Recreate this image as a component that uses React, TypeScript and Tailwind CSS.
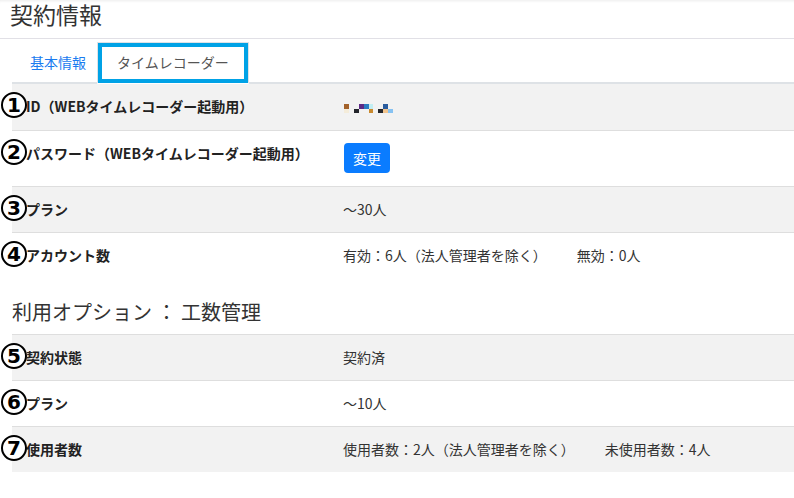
import React from "react";

type Row = {
  num: string;
  label: string;
  value: React.ReactNode;
  tall?: boolean;
  gray?: boolean;
};

function Mosaic() {
  // blurred ID, drawn as pixel blocks
  const cells: [number, number, number, string][] = [
    [1, 0, 5, "#a3622b"],
    [1, 5, 5, "#f4ecda"],
    [11, 5, 5, "#23252b"],
    [16, 0, 5, "#5c2a86"],
    [21, 0, 5, "#2b7cc2"],
    [26, 0, 4, "#c3eef2"],
    [26, 5, 4, "#c98a2f"],
    [35, 5, 5, "#23252b"],
    [40, 0, 5, "#2a5d9f"],
    [40, 5, 5, "#f2c48d"],
    [45, 5, 5, "#86c2f2"],
  ];
  return (
    <svg width="51" height="10" viewBox="0 0 51 10" className="block mt-[8px]">
      {cells.map(([x, y, w, c], i) => (
        <rect key={i} x={x} y={y} width={w} height={y === 0 ? 5 : 4} fill={c} />
      ))}
    </svg>
  );
}

function Circle({ n }: { n: string }) {
  return (
    <div className="absolute left-[-11px] top-[8px] w-[26px] h-[26px] rounded-full border-2 border-black bg-white flex items-center justify-center text-[20px] font-bold leading-none text-black font-['DejaVu_Sans',sans-serif]">
      {n}
    </div>
  );
}

function InfoRow({ row, first }: { row: Row; first?: boolean }) {
  return (
    <div
      className={`relative grid grid-cols-[331px_1fr] pt-[12px] ${row.tall ? "h-[56px]" : "h-[46px]"} ${
        first ? "" : "border-t border-[#dedede]"
      } ${row.gray ? "bg-[#f2f2f2]" : "bg-white"}`}
    >
      <div className="pl-[14px] text-[14px] leading-[20px] font-bold text-[#222]">{row.label}</div>
      <div className="text-[14px] leading-[20px] text-[#333]">{row.value}</div>
      <Circle n={row.num} />
    </div>
  );
}

export default function App() {
  const rows: Row[] = [
    { num: "1", label: "ID（WEBタイムレコーダー起動用）", value: <Mosaic />, gray: true },
    {
      num: "2",
      label: "パスワード（WEBタイムレコーダー起動用）",
      tall: true,
      value: (
        <button className="ml-[1px] w-[46px] h-[30px] rounded-[4px] bg-[#0a7cff] text-white text-[14px] leading-none flex items-center justify-center">
          変更
        </button>
      ),
    },
    { num: "3", label: "プラン", value: "～30人", gray: true },
    {
      num: "4",
      label: "アカウント数",
      value: (
        <span>
          <span className="mr-[30px]">有効：6人（法人管理者を除く）</span>
          <span>無効：0人</span>
        </span>
      ),
    },
  ];

  const options: Row[] = [
    { num: "5", label: "契約状態", value: "契約済", gray: true },
    { num: "6", label: "プラン", value: "～10人" },
    {
      num: "7",
      label: "使用者数",
      gray: true,
      value: (
        <span>
          <span className="mr-[30px]">使用者数：2人（法人管理者を除く）</span>
          <span>未使用者数：4人</span>
        </span>
      ),
    },
  ];

  return (
    <div className="w-[794px] h-[498px] bg-white overflow-hidden font-['Noto_Sans_CJK_JP','Noto_Sans',sans-serif]">
      <div className="h-[39px] border-b border-[#e1e0e6] px-[10px] pt-[1px] shadow-[inset_0_3px_3px_-2px_rgba(0,0,0,0.08)]">
        <h1 className="text-[23px] leading-[26px] font-normal text-[#333]">契約情報</h1>
      </div>

      <div className="ml-[12px] pt-[3px] border-b-2 border-[#dee2e6] flex">
        <div className="h-[40px] w-[85px] pl-[18px] flex items-center text-[14px] text-[#1a7cf0]">基本情報</div>
        <div className="relative h-[42px] -mb-[2px] px-[19px] border-x border-t border-[#dee2e6] border-b-2 border-b-white flex items-center text-[14px] text-[#555]">
          タイムレコーダー
          <div className="absolute left-0 top-0 right-0 bottom-[-1px] border-4 border-[#00a2e6]" />
        </div>
      </div>

      <div className="ml-[12px]">
        {rows.map((r, i) => (
          <InfoRow key={r.num} row={r} first={i === 0} />
        ))}
      </div>

      <div className="h-[56px] pl-[12px] pt-[21px]">
        <h2 className="text-[20px] leading-[26px] font-normal text-[#333]">利用オプション ： 工数管理</h2>
      </div>

      <div className="ml-[12px]">
        {options.map((r) => (
          <InfoRow key={r.num} row={r} />
        ))}
      </div>
    </div>
  );
}
